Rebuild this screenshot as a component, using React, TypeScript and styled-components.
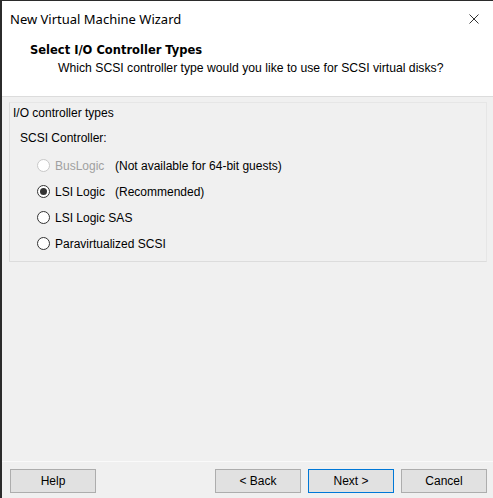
import React from "react";
import styled, { createGlobalStyle } from "styled-components";

const Global = createGlobalStyle`
  html, body { margin: 0; padding: 0; background: #f0f0f0; }
  body { font-family: "Liberation Sans", Arial, sans-serif; font-size: 12px; color: #000; }
`;

const Window = styled.div`
  width: 493px;
  height: 498px;
  box-sizing: border-box;
  border-left: 2px solid #2b2b2b;
  border-top: 1px solid #2b2b2b;
  background: #f0f0f0;
  display: flex;
  flex-direction: column;
`;

const TitleBar = styled.div`
  height: 36px;
  background: #fff;
  display: flex;
  align-items: center;
  justify-content: space-between;
  padding: 0 14px 0 8px;
  font-family: "Noto Sans", "Open Sans", sans-serif;
  font-size: 13px;
  color: #000;
`;

const CloseIcon = styled.svg`
  width: 10px;
  height: 10px;
`;

const Header = styled.div`
  height: 60px;
  background: #fff;
  border-bottom: 1px solid #dcdcdc;
  display: flex;
  flex-direction: column;
  padding: 5px 0 0 28px;
  box-sizing: border-box;
`;

const HeaderTitle = styled.div`
  font-family: "DejaVu Sans", Verdana, sans-serif;
  font-weight: bold;
  font-size: 11.5px;
  line-height: 15px;
  padding-top: 1px;
`;

const HeaderSub = styled.div`
  padding-left: 28px;
  margin-top: 3px;
  line-height: 15px;
  font-size: 12.2px;
`;

const Body = styled.div`
  flex: 1;
  padding: 5px 6px 0 7px;
  display: flex;
  flex-direction: column;
`;

const Group = styled.div`
  height: 160px;
  box-sizing: border-box;
  border: 1px solid #e6e6e6;
  border-left-color: #dcdcdc;
  border-bottom-color: #dcdcdc;
  padding: 3px 0 0 3px;
  display: flex;
  flex-direction: column;
`;

const GroupLabel = styled.div`
  line-height: 15px;
`;

const SectionLabel = styled.div`
  line-height: 15px;
  margin: 10px 0 0 7px;
`;

const Options = styled.div`
  display: flex;
  flex-direction: column;
  gap: 11px;
  margin: 12px 0 0 24px;
`;

const Row = styled.label<{ $disabled?: boolean }>`
  display: flex;
  align-items: center;
  height: 15px;
  color: ${(p) => (p.$disabled ? "#a0a0a0" : "#000")};
`;

const Circle = styled.span<{ $disabled?: boolean; $checked?: boolean }>`
  width: 13px;
  height: 13px;
  box-sizing: border-box;
  border-radius: 50%;
  border: 1px solid ${(p) => (p.$disabled ? "#c8c8c8" : "#333")};
  background: #fff;
  display: flex;
  align-items: center;
  justify-content: center;
  margin-right: 5px;
  &::after {
    content: "";
    display: ${(p) => (p.$checked ? "block" : "none")};
    width: 7px;
    height: 7px;
    border-radius: 50%;
    background: #333;
  }
`;

const OptionName = styled.span<{ $fixed?: boolean }>`
  width: ${(p) => (p.$fixed ? "60px" : "auto")};
`;

const Note = styled.span`
  color: #000;
`;

const Spacer = styled.div`
  flex: 1;
`;

const Footer = styled.div`
  border-top: 1px solid #fafafa;
  height: 37px;
  display: flex;
  align-items: flex-start;
  padding: 7px 6px 0 8px;
  box-sizing: border-box;
  gap: 7px;
`;

const Button = styled.button<{ $default?: boolean }>`
  width: 86px;
  height: 24px;
  box-sizing: border-box;
  background: #e1e1e1;
  border: 1px solid ${(p) => (p.$default ? "#0078d7" : "#adadad")};
  font-family: "Liberation Sans", Arial, sans-serif;
  font-size: 12px;
  color: #000;
  padding: 0;
`;

const Gap = styled.div`
  flex: 1;
`;

const options = [
  { name: "BusLogic", note: "(Not available for 64-bit guests)", disabled: true },
  { name: "LSI Logic", note: "(Recommended)", checked: true },
  { name: "LSI Logic SAS" },
  { name: "Paravirtualized SCSI" },
];

export default function App() {
  return (
    <>
      <Global />
      <Window>
        <TitleBar>
          <span>New Virtual Machine Wizard</span>
          <CloseIcon viewBox="0 0 10 10">
            <path d="M0.5 0.5 L9.5 9.5 M9.5 0.5 L0.5 9.5" stroke="#333" strokeWidth="1" />
          </CloseIcon>
        </TitleBar>
        <Header>
          <HeaderTitle>Select I/O Controller Types</HeaderTitle>
          <HeaderSub>Which SCSI controller type would you like to use for SCSI virtual disks?</HeaderSub>
        </Header>
        <Body>
          <Group>
            <GroupLabel>I/O controller types</GroupLabel>
            <SectionLabel>SCSI Controller:</SectionLabel>
            <Options>
              {options.map((o) => (
                <Row key={o.name} $disabled={o.disabled}>
                  <Circle $disabled={o.disabled} $checked={o.checked} />
                  <OptionName $fixed={!!o.note}>{o.name}</OptionName>
                  {o.note && <Note>{o.note}</Note>}
                </Row>
              ))}
            </Options>
          </Group>
          <Spacer />
        </Body>
        <Footer>
          <Button>Help</Button>
          <Gap />
          <Button>&lt; Back</Button>
          <Button $default>Next &gt;</Button>
          <Button>Cancel</Button>
        </Footer>
      </Window>
    </>
  );
}
